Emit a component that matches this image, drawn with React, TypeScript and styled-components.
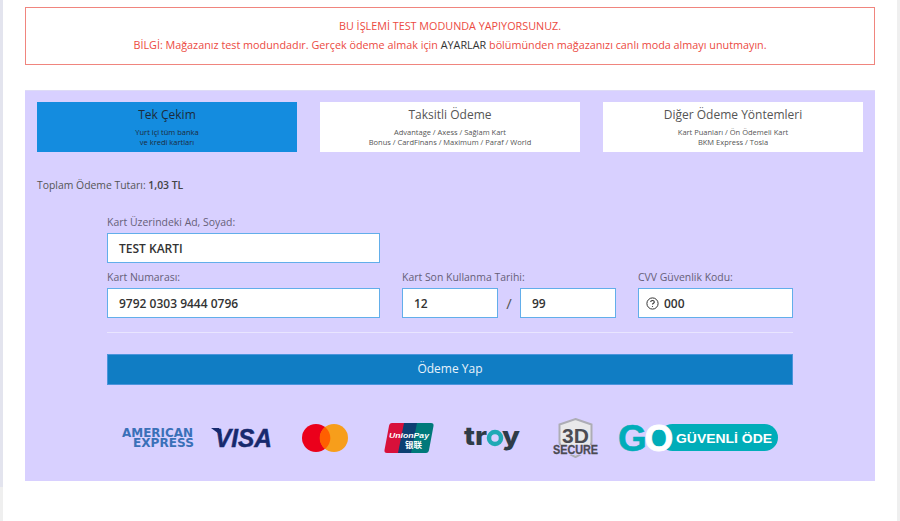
import React from "react";
import styled, { createGlobalStyle } from "styled-components";

const Global = createGlobalStyle`
  html, body { margin: 0; padding: 0; background: #fff; overflow: hidden; }
  body { font-family: "Open Sans", "Noto Sans", "Liberation Sans", sans-serif; }
`;

const Page = styled.div`
  display: flex;
  width: 900px;
  height: 521px;
  background: #fff;
  overflow: hidden;
`;
const LeftRail = styled.div`
  width: 3px;
  height: 487px;
  background: #e3e4ee;
  box-shadow: 0 34px 0 #efefef;
`;
const RightRail = styled.div`
  width: 3px;
  margin-left: auto;
  background: #efefef;
`;
const Content = styled.main`
  width: 850px;
  margin-left: 22px;
  padding-top: 7px;
`;
const Alert = styled.div`
  box-sizing: border-box;
  height: 58px;
  border: 1px solid #f0857e;
  padding-top: 9px;
  text-align: center;
  color: #ec4a42;
  font-size: 10.8px;
  line-height: 18.5px;
`;
const AlertLine = styled.div``;
const AlertStrong = styled.span`
  color: #333;
`;
const Panel = styled.section`
  box-sizing: border-box;
  height: 391px;
  margin-top: 25px;
  padding: 12px 12px 0;
  background: #d8d0ff;
  border-top: 1px solid #dedbf6;
`;
const Tabs = styled.div`
  display: grid;
  grid-template-columns: repeat(3, 260px);
  gap: 23px;
  margin-top: -1px;
`;
const Tab = styled.div<{ $active?: boolean }>`
  box-sizing: border-box;
  height: 50px;
  padding-top: 3px;
  text-align: center;
  background: ${(p) => (p.$active ? "#148cdf" : "#fff")};
  color: ${(p) => (p.$active ? "#1c2b3a" : "#555")};
`;
const TabTitle = styled.div`
  font-size: 12px;
  line-height: 19px;
  margin-bottom: 3px;
`;
const TabSub = styled.div`
  font-size: 7.5px;
  line-height: 10.3px;
`;
const Total = styled.div`
  margin-top: 25px;
  font-size: 10.4px;
  line-height: 16px;
  color: #555;
`;
const TotalValue = styled.b`
  font-weight: 600;
  color: #444;
`;
const Form = styled.div`
  width: 686px;
  margin: 22px 0 0 70px;
`;
const NameRow = styled.div`
  width: 273px;
`;
const CardRow = styled.div`
  display: flex;
  margin-top: 7px;
`;
const Field = styled.div<{ $w: number; $gap?: number }>`
  width: ${(p) => p.$w}px;
  margin-left: ${(p) => p.$gap ?? 0}px;
`;
const Label = styled.div`
  font-size: 10.45px;
  line-height: 15px;
  margin-bottom: 3px;
  color: #665f78;
`;
const Input = styled.div`
  box-sizing: border-box;
  display: flex;
  align-items: center;
  gap: 5px;
  height: 30px;
  padding-left: 11px;
  background: #fff;
  border: 1px solid #62aeea;
  font-size: 12px;
  font-weight: 600;
  color: #333;
`;
const CvvInput = styled(Input)`
  padding-left: 7px;
`;
const ExpiryRow = styled.div`
  display: flex;
  align-items: center;
`;
const ExpiryInput = styled(Input)`
  width: 96px;
`;
const Slash = styled.span`
  width: 22px;
  text-align: center;
  font-size: 15px;
  color: #555;
`;
const Divider = styled.hr`
  margin: 14px 0 21px;
  border: 0;
  height: 1px;
  background: #e9e5ff;
`;
const PayButton = styled.button`
  display: block;
  width: 100%;
  height: 31px;
  padding: 0 0 2px;
  background: #107dc4;
  border: 1px solid #4b94dc;
  color: #e8f3fb;
  font: 400 12px "Open Sans", sans-serif;
`;
const Logos = styled.div`
  display: flex;
  align-items: center;
  height: 40px;
  margin: 33px 0 0 15px;
`;
const Logo = styled.svg<{ $gap: number }>`
  display: block;
  flex: none;
  overflow: visible;
  margin-left: ${(p) => p.$gap}px;
`;

const HelpIcon = () => (
  <svg width="13" height="13" viewBox="0 0 13 13" fill="none" stroke="#333" strokeWidth="1">
    <circle cx="6.5" cy="6.5" r="5.6" />
    <path d="M4.7 5.1c0-1 .8-1.600 1.800-1.600s1.800.6 1.800 1.500c0 1.300-1.800 1.300-1.800 2.600" strokeWidth="1.100" />
    <circle cx="6.5" cy="9.5" r=".6" fill="#333" stroke="none" />
  </svg>
);

const Amex = () => (
  <Logo $gap={0} width="72" height="24" viewBox="0 0 72 24" fontFamily="DejaVu Sans, sans-serif" fontWeight="700" fill="#3a70b8">
    <text x="0" y="11" fontSize="11.8" textLength="71" lengthAdjust="spacingAndGlyphs">AMERICAN</text>
    <text x="11" y="21" fontSize="11.8" textLength="61" lengthAdjust="spacingAndGlyphs">EXPRESS</text>
  </Logo>
);
const Visa = () => (
  <Logo $gap={17} width="61" height="30" viewBox="0 0 61 30" fill="#172a6e">
    <text x="4" y="24" fontFamily="Liberation Sans, sans-serif" fontWeight="700" fontStyle="italic" fontSize="26.500" stroke="#172a6e" strokeWidth=".5" textLength="57" lengthAdjust="spacingAndGlyphs">VISA</text>
    <path d="M0 5h8l3 8z" />
  </Logo>
);
const Mastercard = () => (
  <Logo $gap={30} width="46" height="28" viewBox="0 0 46 28">
    <circle cx="14" cy="14" r="14" fill="#eb001b" />
    <circle cx="32" cy="14" r="14" fill="#f79e1b" />
    <path d="M23 3a14 14 0 0 1 0 22 14 14 0 0 1 0-22z" fill="#ff5f00" />
  </Logo>
);
const UnionPay = () => (
  <Logo $gap={36} width="50" height="30" viewBox="0 0 50 30">
    <path d="M8 0h16l-6 30H3q-3 0-2.500-3L5 3q.5-3 3-3z" fill="#d8103a" />
    <path d="M20 0h17l-6 30H14z" fill="#0d3f72" />
    <path d="M33 0h14q3 0 2.500 3L45 27q-.5 3-3 3H27z" fill="#00797a" />
    <text x="5" y="15" fill="#fff" fontFamily="Liberation Sans, sans-serif" fontWeight="700" fontStyle="italic" fontSize="8" textLength="40" lengthAdjust="spacingAndGlyphs">UnionPay</text>
    <text x="21" y="25" fill="#fff" fontFamily="Noto Sans CJK SC, sans-serif" fontWeight="700" fontSize="8.500">银联</text>
  </Logo>
);
const Troy = () => (
  <Logo $gap={30} width="56" height="28" viewBox="0 0 56 28" fontFamily="Inter, sans-serif" fontWeight="800" fill="#2f3c48">
    <text x="0" y="21" fontSize="26" textLength="23" lengthAdjust="spacingAndGlyphs">tr</text>
    <circle cx="31" cy="14" r="6" fill="none" stroke="#1fa9b5" strokeWidth="4.500" />
    <text x="38" y="21" fontSize="26" textLength="18" lengthAdjust="spacingAndGlyphs">y</text>
  </Logo>
);
const Secure = () => (
  <Logo $gap={33} width="45" height="40" viewBox="0 0 45 40" fontFamily="Liberation Sans, sans-serif" fontWeight="700" textAnchor="middle" fill="#4b4b52">
    <path d="M22.500 1l16 5.500V24q0 8-16 15-16-7-16-15V6.500z" fill="#e9e9ea" stroke="#adadb5" strokeWidth="2" />
    <rect x="0" y="27" width="45" height="10" fill="#d8d0ff" />
    <text x="22.500" y="25" fontSize="21">3D</text>
    <text x="22.500" y="36" fontSize="12.500" stroke="#4b4b52" strokeWidth=".3" textLength="45" lengthAdjust="spacingAndGlyphs">SECURE</text>
  </Logo>
);
const GoBadge = () => (
  <Logo $gap={21} width="160" height="30" viewBox="0 0 160 30" fontFamily="Liberation Sans, sans-serif" fontWeight="700">
    <rect x="40" y="1" width="119" height="27" rx="13.500" fill="#00adb9" />
    <circle cx="39.500" cy="14.500" r="11" fill="#00adb9" />
    <text x="-1" y="28" fill="#00adb9" fontSize="37" stroke="#00adb9" strokeWidth=".6">G</text>
    <text x="25.500" y="28" fill="#fff" fontSize="37" stroke="#fff" strokeWidth=".8">O</text>
    <text x="57" y="20" fill="#fff" fontSize="13.500" textLength="96" lengthAdjust="spacingAndGlyphs">GÜVENLİ ÖDE</text>
  </Logo>
);

export default function App() {
  return (
    <Page>
      <Global />
      <LeftRail />
      <Content>
        <Alert>
          <AlertLine>BU İŞLEMİ TEST MODUNDA YAPIYORSUNUZ.</AlertLine>
          <AlertLine>
            BİLGİ: Mağazanız test modundadır. Gerçek ödeme almak için <AlertStrong>AYARLAR</AlertStrong> bölümünden mağazanızı canlı moda almayı unutmayın.
          </AlertLine>
        </Alert>
        <Panel>
          <Tabs>
            <Tab $active>
              <TabTitle>Tek Çekim</TabTitle>
              <TabSub>Yurt içi tüm banka</TabSub>
              <TabSub>ve kredi kartları</TabSub>
            </Tab>
            <Tab>
              <TabTitle>Taksitli Ödeme</TabTitle>
              <TabSub>Advantage / Axess / Sağlam Kart</TabSub>
              <TabSub>Bonus / CardFinans / Maximum / Paraf / World</TabSub>
            </Tab>
            <Tab>
              <TabTitle>Diğer Ödeme Yöntemleri</TabTitle>
              <TabSub>Kart Puanları / Ön Ödemeli Kart</TabSub>
              <TabSub>BKM Express / Tosla</TabSub>
            </Tab>
          </Tabs>
          <Total>
            Toplam Ödeme Tutarı: <TotalValue>1,03 TL</TotalValue>
          </Total>
          <Form>
            <NameRow>
              <Label>Kart Üzerindeki Ad, Soyad:</Label>
              <Input>TEST KARTI</Input>
            </NameRow>
            <CardRow>
              <Field $w={273}>
                <Label>Kart Numarası:</Label>
                <Input>9792 0303 9444 0796</Input>
              </Field>
              <Field $w={214} $gap={22}>
                <Label>Kart Son Kullanma Tarihi:</Label>
                <ExpiryRow>
                  <ExpiryInput>12</ExpiryInput>
                  <Slash>/</Slash>
                  <ExpiryInput>99</ExpiryInput>
                </ExpiryRow>
              </Field>
              <Field $w={155} $gap={22}>
                <Label>CVV Güvenlik Kodu:</Label>
                <CvvInput>
                  <HelpIcon />
                  000
                </CvvInput>
              </Field>
            </CardRow>
            <Divider />
            <PayButton>Ödeme Yap</PayButton>
            <Logos>
              <Amex />
              <Visa />
              <Mastercard />
              <UnionPay />
              <Troy />
              <Secure />
              <GoBadge />
            </Logos>
          </Form>
        </Panel>
      </Content>
      <RightRail />
    </Page>
  );
}
